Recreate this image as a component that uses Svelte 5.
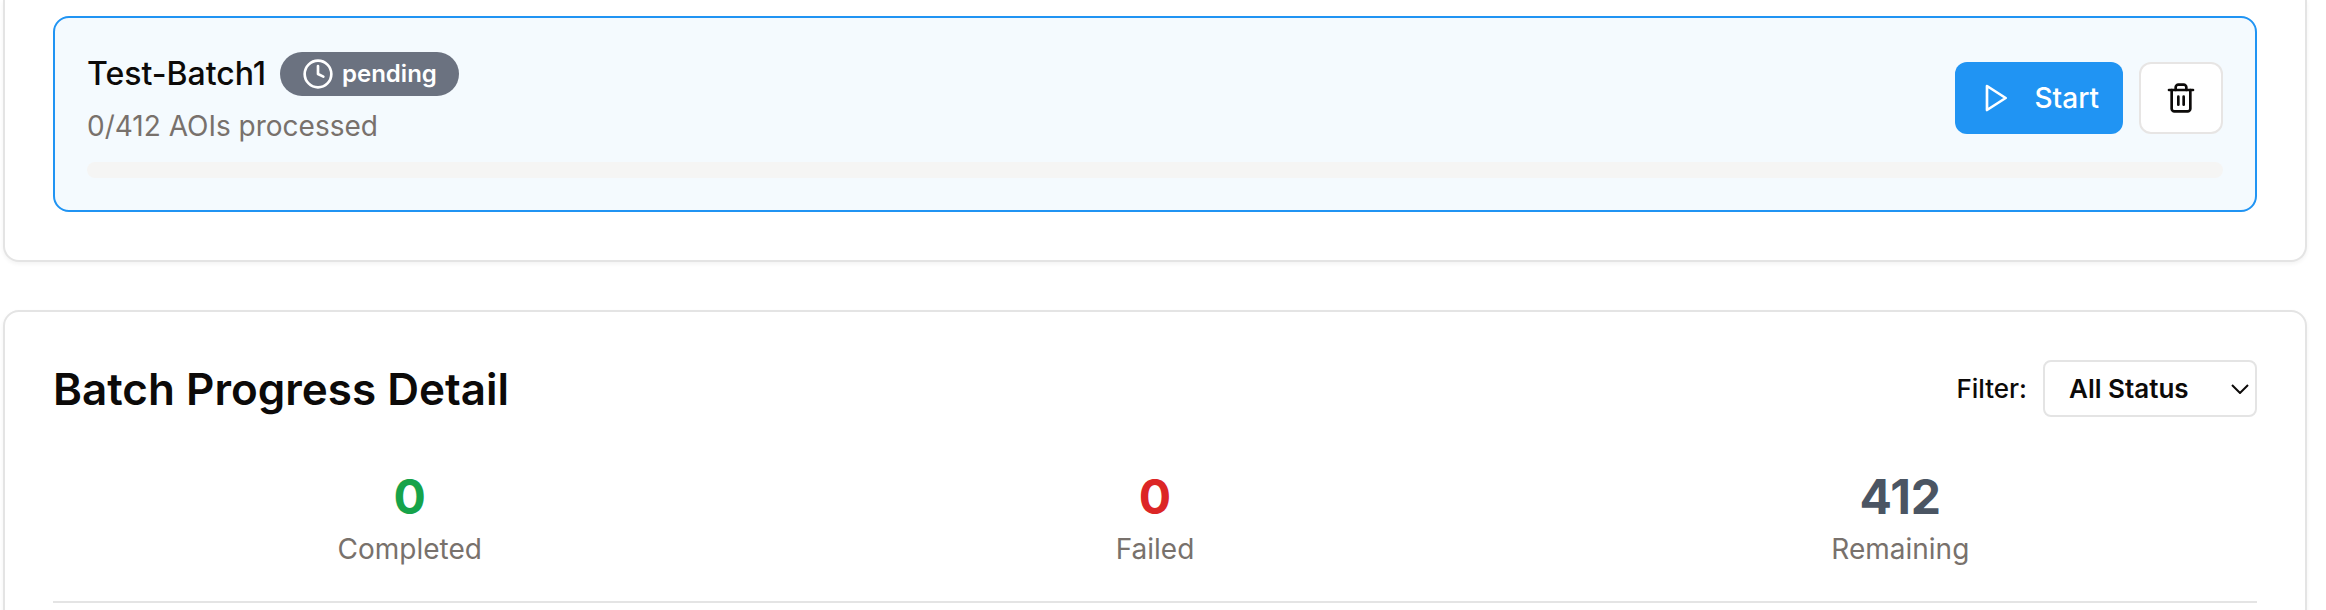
<script>
  let batch = $state({ name: 'Test-Batch1', status: 'pending', processed: 0, total: 412 });
  let filter = $state('all');

  const percent = $derived((batch.processed / batch.total) * 100);
  const stats = $derived([
    { label: 'Completed', value: 0, tone: 'green' },
    { label: 'Failed', value: 0, tone: 'red' },
    { label: 'Remaining', value: batch.total - batch.processed, tone: 'slate' }
  ]);
</script>

<main class="page">
  <section class="card card-list">
    <article class="batch">
      <div class="batch-row">
        <div class="batch-info">
          <div class="batch-title">
            <span class="batch-name">{batch.name}</span>
            <span class="badge">
              <svg class="icon" viewBox="0 0 24 24" aria-hidden="true">
                <circle cx="12" cy="12" r="10" />
                <polyline points="12 6 12 12 16 14" />
              </svg>
              {batch.status}
            </span>
          </div>
          <div class="muted">{batch.processed}/{batch.total} AOIs processed</div>
        </div>
        <div class="actions">
          <button class="btn btn-primary" type="button">
            <svg class="icon" viewBox="0 0 24 24" aria-hidden="true">
              <polygon points="6 3 20 12 6 21 6 3" />
            </svg>
            Start
          </button>
          <button class="btn btn-outline" type="button" aria-label="Delete batch">
            <svg class="icon" viewBox="0 0 24 24" aria-hidden="true">
              <path d="M3 6h18" />
              <path d="M19 6v14c0 1-1 2-2 2H7c-1 0-2-1-2-2V6" />
              <path d="M8 6V4c0-1 1-2 2-2h4c1 0 2 1 2 2v2" />
              <line x1="10" x2="10" y1="11" y2="17" />
              <line x1="14" x2="14" y1="11" y2="17" />
            </svg>
          </button>
        </div>
      </div>
      <div class="track" role="progressbar" aria-label="Batch progress" aria-valuenow={percent} aria-valuemin="0" aria-valuemax="100">
        <div class="fill" style="width: {percent}%"></div>
      </div>
    </article>
  </section>

  <section class="card">
    <header class="detail-header">
      <h3>Batch Progress Detail</h3>
      <div class="filter">
        <label for="status-filter">Filter:</label>
        <div class="select-wrap">
          <select id="status-filter" bind:value={filter}>
            <option value="all">All Status</option>
            <option value="done">Completed</option>
            <option value="failed">Failed</option>
          </select>
          <svg class="chevron" viewBox="0 0 18 10" aria-hidden="true">
            <path d="M1 1l8 8 8-8" />
          </svg>
        </div>
      </div>
    </header>
    <div class="stats">
      {#each stats as stat}
        <div class="stat">
          <div class="stat-value {stat.tone}">{stat.value}</div>
          <div class="muted">{stat.label}</div>
        </div>
      {/each}
    </div>
  </section>
</main>

<style>
  :global(body) {
    background: #fff;
  }

  .page {
    display: flex;
    flex-direction: column;
    gap: 48px;
    box-sizing: border-box;
    height: 100vh;
    overflow: hidden;
    padding: 0 19px 0 3px;
    color: #0c0a09;
    font-family: Inter, 'Liberation Sans', sans-serif;
    font-size: 32px;
    line-height: 48px;
  }

  .card {
    flex: none;
    padding: 48px;
    border: 2px solid #e4e4e4;
    border-radius: 16px;
    background: #fff;
    box-shadow: 0 2px 4px rgb(0 0 0 / 5%);
  }

  .card-list {
    padding-top: 16px;
    border-top: 0;
    border-radius: 0 0 16px 16px;
  }

  .batch {
    padding: 32px;
    border: 2px solid #2094f3;
    border-radius: 16px;
    background: #f4fafe;
  }

  .batch-row {
    display: flex;
    align-items: center;
    justify-content: space-between;
    margin-bottom: 16px;
  }

  .batch-info {
    display: flex;
    flex-direction: column;
    gap: 8px;
  }

  .batch-title {
    display: flex;
    align-items: center;
    gap: 14px;
  }

  .batch-name {
    font-weight: 500;
  }

  .badge {
    display: inline-flex;
    align-items: center;
    gap: 8px;
    padding: 6px 22px;
    border-radius: 22px;
    background: #6b7280;
    color: #fff;
    font-size: 24px;
    font-weight: 600;
    line-height: 32px;
  }

  .icon {
    width: 32px;
    height: 32px;
    flex: none;
    fill: none;
    stroke: currentColor;
    stroke-width: 2;
    stroke-linecap: round;
    stroke-linejoin: round;
  }

  .muted {
    color: #78716c;
    font-size: 28px;
    line-height: 40px;
  }

  .actions {
    display: flex;
    gap: 16px;
  }

  .btn {
    display: inline-flex;
    align-items: center;
    gap: 24px;
    height: 72px;
    padding: 0 24px;
    border: 0;
    border-radius: 12px;
    font: inherit;
    font-size: 28px;
    font-weight: 500;
    line-height: 40px;
    cursor: pointer;
  }

  .btn-primary {
    background: #2094f3;
    color: #fff;
  }

  .btn-outline {
    border: 2px solid #e7e5e4;
    background: #fff;
    color: #0c0a09;
  }

  .track {
    height: 16px;
    overflow: hidden;
    border-radius: 8px;
    background: #f5f5f4;
  }

  .fill {
    height: 100%;
    background: #2094f3;
  }

  .detail-header {
    display: flex;
    align-items: center;
    justify-content: space-between;
    margin-bottom: 48px;
  }

  h3 {
    margin: 0;
    font-size: 44px;
    font-weight: 600;
    line-height: 56px;
  }

  .filter {
    display: flex;
    align-items: center;
    gap: 16px;
    font-size: 26px;
    font-weight: 500;
    line-height: 40px;
  }

  .select-wrap {
    display: grid;
    align-items: center;
  }

  select,
  .chevron {
    grid-area: 1 / 1;
  }

  select {
    appearance: none;
    width: 214px;
    height: 57px;
    padding: 0 32px 0 24px;
    border: 2px solid #e4e4e4;
    border-radius: 8px;
    background: #fff;
    color: inherit;
    font: inherit;
    font-weight: 600;
  }

  .chevron {
    justify-self: end;
    width: 18px;
    height: 10px;
    margin-right: 8px;
    fill: none;
    stroke: #0c0a09;
    stroke-width: 2;
    pointer-events: none;
  }

  .stats {
    display: grid;
    grid-template-columns: repeat(3, 1fr);
    gap: 32px;
    padding-bottom: 32px;
    border-bottom: 2px solid #e4e4e4;
    text-align: center;
  }

  .stat-value {
    font-size: 48px;
    font-weight: 700;
    line-height: 64px;
  }

  .green {
    color: #16a34a;
  }

  .red {
    color: #dc2626;
  }

  .slate {
    color: #4b5563;
  }
</style>
